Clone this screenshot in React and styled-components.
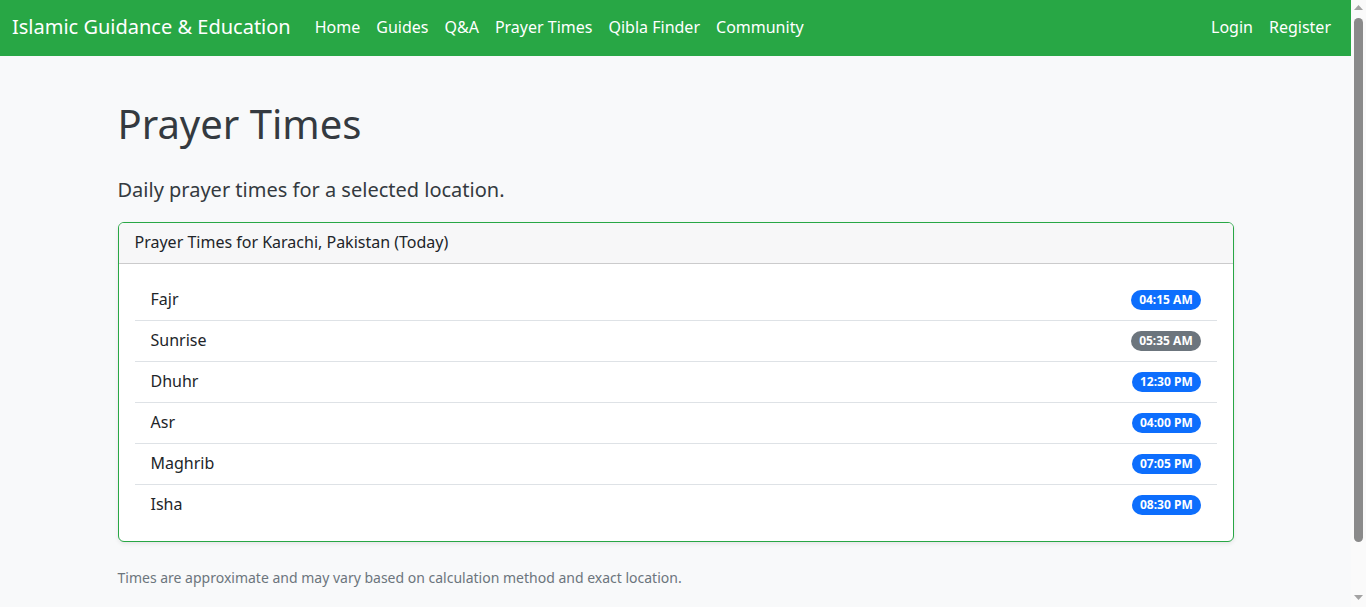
import React from "react";
import styled, { createGlobalStyle } from "styled-components";

const GlobalStyle = createGlobalStyle`
  *, *::before, *::after { box-sizing: border-box; }
  html, body {
    margin: 0;
    padding: 0;
  }
  body {
    background: #f8f9fa;
    color: #212529;
    font-family: "Noto Sans", "Open Sans", sans-serif;
    font-size: 16px;
    line-height: 1.5;
  }
`;

const Page = styled.div`
  margin-right: 15px;
`;

const Scrollbar = styled.div`
  position: fixed;
  top: 0;
  right: 0;
  width: 15px;
  height: 100vh;
  background: #fafafa;
  display: flex;
  flex-direction: column;
`;

const ScrollArrow = styled.div`
  height: 15px;
  flex: none;
  display: flex;
  align-items: ${(p) => (p.$down ? "flex-start" : "flex-end")};
  justify-content: center;
  padding: ${(p) => (p.$down ? "3px 0 0" : "0 0 5px")};
`;

const ScrollTrack = styled.div`
  flex: 1;
  padding: 3px 3px 50px;
  display: flex;
`;

const ScrollThumb = styled.div`
  flex: 1;
  background: #8a8a8a;
  border-radius: 5px;
`;

const Navbar = styled.nav`
  display: flex;
  align-items: center;
  justify-content: space-between;
  background: #28a745;
  padding: 7px 12px 9px;
  height: 56px;
`;

const NavLeft = styled.div`
  display: flex;
  align-items: center;
`;

const Brand = styled.a`
  color: #ffffff;
  font-size: 20px;
  line-height: 30px;
  padding: 5px 0;
  margin-right: 16px;
  text-decoration: none;
  white-space: nowrap;
`;

const NavList = styled.div`
  display: flex;
  align-items: center;
`;

const NavLink = styled.a`
  color: #ffffff;
  font-size: 16px;
  line-height: 24px;
  padding: 8px;
  text-decoration: none;
  white-space: nowrap;
`;

const Main = styled.main`
  max-width: 1140px;
  margin: 0 auto;
  padding: 44px 12px 67px;
`;

const Title = styled.h1`
  margin: 0 0 27px;
  font-size: 40px;
  line-height: 1.2;
  font-weight: 400;
  color: #343a40;
`;

const Lead = styled.p`
  margin: 0 0 17px;
  font-size: 20px;
  line-height: 30px;
  font-weight: 400;
  color: #343a40;
`;

const Card = styled.section`
  background: #ffffff;
  border: 1px solid #28a745;
  border-radius: 6px;
  box-shadow: 0 2px 4px rgba(0, 0, 0, 0.075);
  margin-bottom: 25px;
  overflow: hidden;
`;

const CardHeader = styled.div`
  background: #f7f7f8;
  border-bottom: 1px solid rgba(0, 0, 0, 0.175);
  padding: 7px 16px 9px;
  line-height: 24px;
  color: #212529;
`;

const CardBody = styled.div`
  padding: 16px;
`;

const List = styled.ul`
  list-style: none;
  margin: 0;
  padding: 0;
`;

const Item = styled.li`
  display: flex;
  align-items: center;
  justify-content: space-between;
  padding: 7px 16px 9px;
  line-height: 24px;
  border-bottom: 1px solid #dee2e6;
  &:last-child { border-bottom: none; }
`;

const ItemName = styled.span`
  color: #212529;
`;

const Badge = styled.span`
  display: inline-block;
  margin-top: 2px;
  background: ${(p) => (p.$variant === "secondary" ? "#6c757d" : "#0d6efd")};
  color: #ffffff;
  font-size: 12px;
  font-weight: 700;
  line-height: 1;
  padding: 4.2px 7.8px;
  border-radius: 50rem;
  white-space: nowrap;
`;

const Note = styled.p`
  margin: 0 0 16px;
  font-size: 14px;
  line-height: 21px;
  color: #6c757d;
`;

const times = [
  { name: "Fajr", time: "04:15 AM" },
  { name: "Sunrise", time: "05:35 AM", variant: "secondary" },
  { name: "Dhuhr", time: "12:30 PM" },
  { name: "Asr", time: "04:00 PM" },
  { name: "Maghrib", time: "07:05 PM" },
  { name: "Isha", time: "08:30 PM" },
];

export default function App() {
  return (
    <>
      <GlobalStyle />
      <Page>
        <Navbar>
          <NavLeft>
            <Brand href="#">Islamic Guidance &amp; Education</Brand>
            <NavList>
              <NavLink href="#">Home</NavLink>
              <NavLink href="#">Guides</NavLink>
              <NavLink href="#">Q&amp;A</NavLink>
              <NavLink href="#">Prayer Times</NavLink>
              <NavLink href="#">Qibla Finder</NavLink>
              <NavLink href="#">Community</NavLink>
            </NavList>
          </NavLeft>
          <NavList>
            <NavLink href="#">Login</NavLink>
            <NavLink href="#">Register</NavLink>
          </NavList>
        </Navbar>
        <Main>
          <Title>Prayer Times</Title>
          <Lead>Daily prayer times for a selected location.</Lead>
          <Card>
            <CardHeader>Prayer Times for Karachi, Pakistan (Today)</CardHeader>
            <CardBody>
              <List>
                {times.map((t) => (
                  <Item key={t.name}>
                    <ItemName>{t.name}</ItemName>
                    <Badge $variant={t.variant}>{t.time}</Badge>
                  </Item>
                ))}
              </List>
            </CardBody>
          </Card>
          <Note>Times are approximate and may vary based on calculation method and exact location.</Note>
        </Main>
      </Page>
      <Scrollbar aria-hidden="true">
        <ScrollArrow>
          <svg width="9" height="5" viewBox="0 0 9 5">
            <polygon points="4.5,0 9,5 0,5" fill="#a3a3a3" />
          </svg>
        </ScrollArrow>
        <ScrollTrack>
          <ScrollThumb />
        </ScrollTrack>
        <ScrollArrow $down>
          <svg width="9" height="5" viewBox="0 0 9 5">
            <polygon points="0,0 9,0 4.5,5" fill="#a3a3a3" />
          </svg>
        </ScrollArrow>
      </Scrollbar>
    </>
  );
}
